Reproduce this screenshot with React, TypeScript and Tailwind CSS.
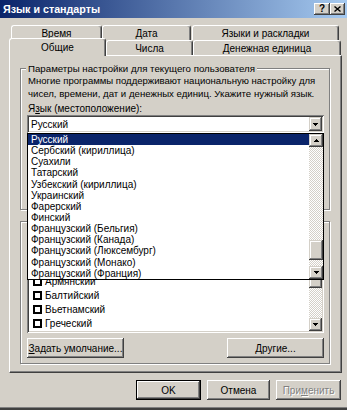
import React from "react";

const face = "bg-[#d4d0c8]";
const raised =
  "shadow-[inset_-1px_-1px_0_#404040,inset_1px_1px_0_#ffffff,inset_-2px_-2px_0_#808080,inset_2px_2px_0_#d4d0c8]";
const sbBtn =
  "shadow-[inset_-1px_-1px_0_#404040,inset_1px_1px_0_#d4d0c8,inset_-2px_-2px_0_#808080,inset_2px_2px_0_#ffffff]";
const sunken =
  "shadow-[inset_1px_1px_0_#808080,inset_-1px_-1px_0_#ffffff,inset_2px_2px_0_#404040,inset_-2px_-2px_0_#d4d0c8]";
const checker =
  "bg-[image:repeating-conic-gradient(#ffffff_0_25%,#d4d0c8_0_50%)] bg-[length:2px_2px]";

function Arrow({ up }: { up?: boolean }) {
  return (
    <svg width="5" height="3" viewBox="0 0 5 3" shapeRendering="crispEdges" className="block">
      {up ? (
        <>
          <rect x="2" y="0" width="1" height="1" fill="#000" />
          <rect x="1" y="1" width="3" height="1" fill="#000" />
          <rect x="0" y="2" width="5" height="1" fill="#000" />
        </>
      ) : (
        <>
          <rect x="0" y="0" width="5" height="1" fill="#000" />
          <rect x="1" y="1" width="3" height="1" fill="#000" />
          <rect x="2" y="2" width="1" height="1" fill="#000" />
        </>
      )}
    </svg>
  );
}

function BackTab({ label, w, className = "" }: { label: string; w: string; className?: string }) {
  return (
    <div
      className={`${w} h-[15px] border-l border-t border-r border-white border-r-[#404040] rounded-t-[3px] shadow-[inset_-1px_0_0_#808080] flex items-center justify-center pt-[1px] ${className}`}
    >
      {label}
    </div>
  );
}

const langs = [
  "Русский",
  "Сербский (кириллица)",
  "Суахили",
  "Татарский",
  "Узбекский (кириллица)",
  "Украинский",
  "Фарерский",
  "Финский",
  "Французский (Бельгия)",
  "Французский (Канада)",
  "Французский (Люксембург)",
  "Французский (Монако)",
  "Французский (Франция)",
];

const checks = ["", "Армянский", "Балтийский", "Вьетнамский", "Греческий"];

function Dropdown() {
  return (
    <div className="absolute left-0 top-full z-20 w-[297px] h-[147px] border border-black bg-white flex">
      <div className="flex-1 flex flex-col">
        {langs.map((l, i) => (
          <div
            key={l}
            className={`h-[11.15px] leading-[11.15px] pl-[3px] whitespace-nowrap ${
              i === 0 ? "bg-[#0a246a] text-white" : ""
            }`}
          >
            {l}
          </div>
        ))}
      </div>
      <div className="w-[14px] flex flex-col">
        <div className={`h-[13px] ${face} ${sbBtn} flex items-center justify-center`}>
          <Arrow up />
        </div>
        <div className={`h-[93px] ${checker}`} />
        <div className={`h-[20px] ${face} ${sbBtn}`} />
        <div className={`h-[6px] ${checker}`} />
        <div className={`h-[13px] ${face} ${sbBtn} flex items-center justify-center`}>
          <Arrow />
        </div>
      </div>
    </div>
  );
}

function Button({
  children,
  w,
  def,
  disabled,
}: {
  children: React.ReactNode;
  w: string;
  def?: boolean;
  disabled?: boolean;
}) {
  const sh = def
    ? "shadow-[inset_0_0_0_1px_#000000,inset_-2px_-2px_0_#404040,inset_2px_2px_0_#ffffff,inset_-3px_-3px_0_#808080]"
    : raised;
  return (
    <div
      className={`${w} h-[20px] ${face} ${sh} flex items-center justify-center whitespace-nowrap ${
        disabled ? "text-[#808080] [text-shadow:1px_1px_0_#ffffff]" : ""
      }`}
    >
      {children}
    </div>
  );
}

export default function App() {
  return (
    <div className="w-[347px] h-[410px] bg-[#d4d0c8] font-['Liberation_Sans',Arial,sans-serif] text-[10px] leading-[13px] text-black overflow-hidden flex flex-col border-b-2 border-b-[#404040] shadow-[inset_0_-1px_0_#808080]">
      {/* title bar */}
      <div className="h-[18px] shrink-0 flex items-center justify-between pl-[3px] pr-[2px] bg-[linear-gradient(to_right,#0a246a,#a6caf0)]">
        <span className="text-white font-bold text-[10.7px] leading-[13px]">Язык и стандарты</span>
        <div className="flex">
          <div className={`w-[16px] h-[12px] ${face} ${raised} flex items-center justify-center font-bold text-[10px] leading-none`}>
            ?
          </div>
          <div className={`w-[15px] h-[12px] ${face} ${raised} flex items-center justify-center`}>
            <svg width="7" height="6" viewBox="0 0 7 6">
              <path d="M0.5 0.5 L6.5 5.5 M6.5 0.5 L0.5 5.5" stroke="#000" strokeWidth="1.4" fill="none" />
            </svg>
          </div>
        </div>
      </div>

      {/* tabs */}
      <div className="h-[37px] shrink-0 pt-[7px]">
        <div className="flex pl-[11px]">
          <BackTab label="Время" w="w-[91px]" />
          <BackTab label="Дата" w="w-[89px]" />
          <BackTab label="Языки и раскладки" w="w-[147px]" className="ml-[1px]" />
        </div>
        <div className="flex items-end h-[15px] pl-[9px]">
          <div className="relative z-10 w-[97px] h-[18px] -mb-[1px] bg-[#d4d0c8] border-l border-t border-r border-white border-r-[#404040] rounded-t-[3px] shadow-[inset_-1px_0_0_#808080] flex justify-center pt-[2px]">
            Общие
          </div>
          <BackTab label="Числа" w="w-[87px]" />
          <BackTab label="Денежная единица" w="w-[148px]" />
        </div>
      </div>

      {/* panel */}
      <div className="ml-[9px] w-[333px] h-[318px] shrink-0 border-l border-t border-r border-b border-white border-r-[#404040] border-b-[#404040] shadow-[inset_-1px_-1px_0_#808080] pt-[12px] pl-[10px]">
        {/* group 1 */}
        <div className="relative w-[310px] h-[142px] border border-[#808080] shadow-[1px_1px_0_#ffffff,inset_1px_1px_0_#ffffff] pt-[5px] pl-[6px]">
          <span className="absolute left-[5px] -top-[7px] px-[2px] bg-[#d4d0c8] whitespace-nowrap text-[9.7px]">
            Параметры настройки для текущего пользователя
          </span>
          <div className="pl-[1px] whitespace-nowrap text-[9.55px]">
            Многие программы поддерживают национальную настройку для
          </div>
          <div className="pl-[1px] whitespace-nowrap text-[9.65px]">
            чисел, времени, дат и денежных единиц. Укажите нужный язык.
          </div>
          <div className="pl-[1px] mt-[2px]">
            Я<u>з</u>ык (местоположение):
          </div>
          <div className="relative w-[297px] h-[18px]">
            <div className={`w-full h-full bg-white ${sunken} p-[2px] flex`}>
              <div className="flex-1 flex items-center pl-[2px]">Русский</div>
              <div className={`w-[13px] h-full ${face} ${sbBtn} flex items-center justify-center`}>
                <Arrow />
              </div>
            </div>
            <Dropdown />
          </div>
        </div>

        {/* group 2 (its caption and description lie under the open list) */}
        <div className="relative mt-[11px] w-[310px] h-[143px] border border-[#808080] shadow-[1px_1px_0_#ffffff,inset_1px_1px_0_#ffffff] pt-[5px] pl-[6px]">
          <div className="h-[26px]" />
          <div className={`mt-[5px] w-[297px] h-[75px] bg-white ${sunken} p-[2px] flex`}>
            <div className="flex-1 flex flex-col">
              {checks.map((c, i) => (
                <div key={i} className="h-[14px] flex items-center pl-[4px]">
                  <div className="w-[9px] h-[9px] border-2 border-black bg-white" />
                  {c && <span className="ml-[3px]">{c}</span>}
                </div>
              ))}
            </div>
            <div className="w-[13px] flex flex-col">
              <div className={`h-[13px] ${face} ${sbBtn} flex items-center justify-center`}>
                <Arrow up />
              </div>
              <div className={`h-[15px] ${face} ${sbBtn}`} />
              <div className={`flex-1 ${checker}`} />
              <div className={`h-[13px] ${face} ${sbBtn} flex items-center justify-center`}>
                <Arrow />
              </div>
            </div>
          </div>
          <div className="mt-[5px] w-[297px] flex justify-between">
            <Button w="w-[97px]">
              <span>
                <u>З</u>адать умолчание...
              </span>
            </Button>
            <Button w="w-[97px]">
              <span>
                <u>Д</u>ругие...
              </span>
            </Button>
          </div>
        </div>
      </div>

      {/* bottom buttons */}
      <div className="mt-[7px] flex justify-end pr-[6px] gap-[6px]">
        <Button w="w-[65px]" def>
          OK
        </Button>
        <Button w="w-[63px]">Отмена</Button>
        <Button w="w-[65px]" disabled>
          <span>
            При<u>м</u>енить
          </span>
        </Button>
      </div>
    </div>
  );
}
